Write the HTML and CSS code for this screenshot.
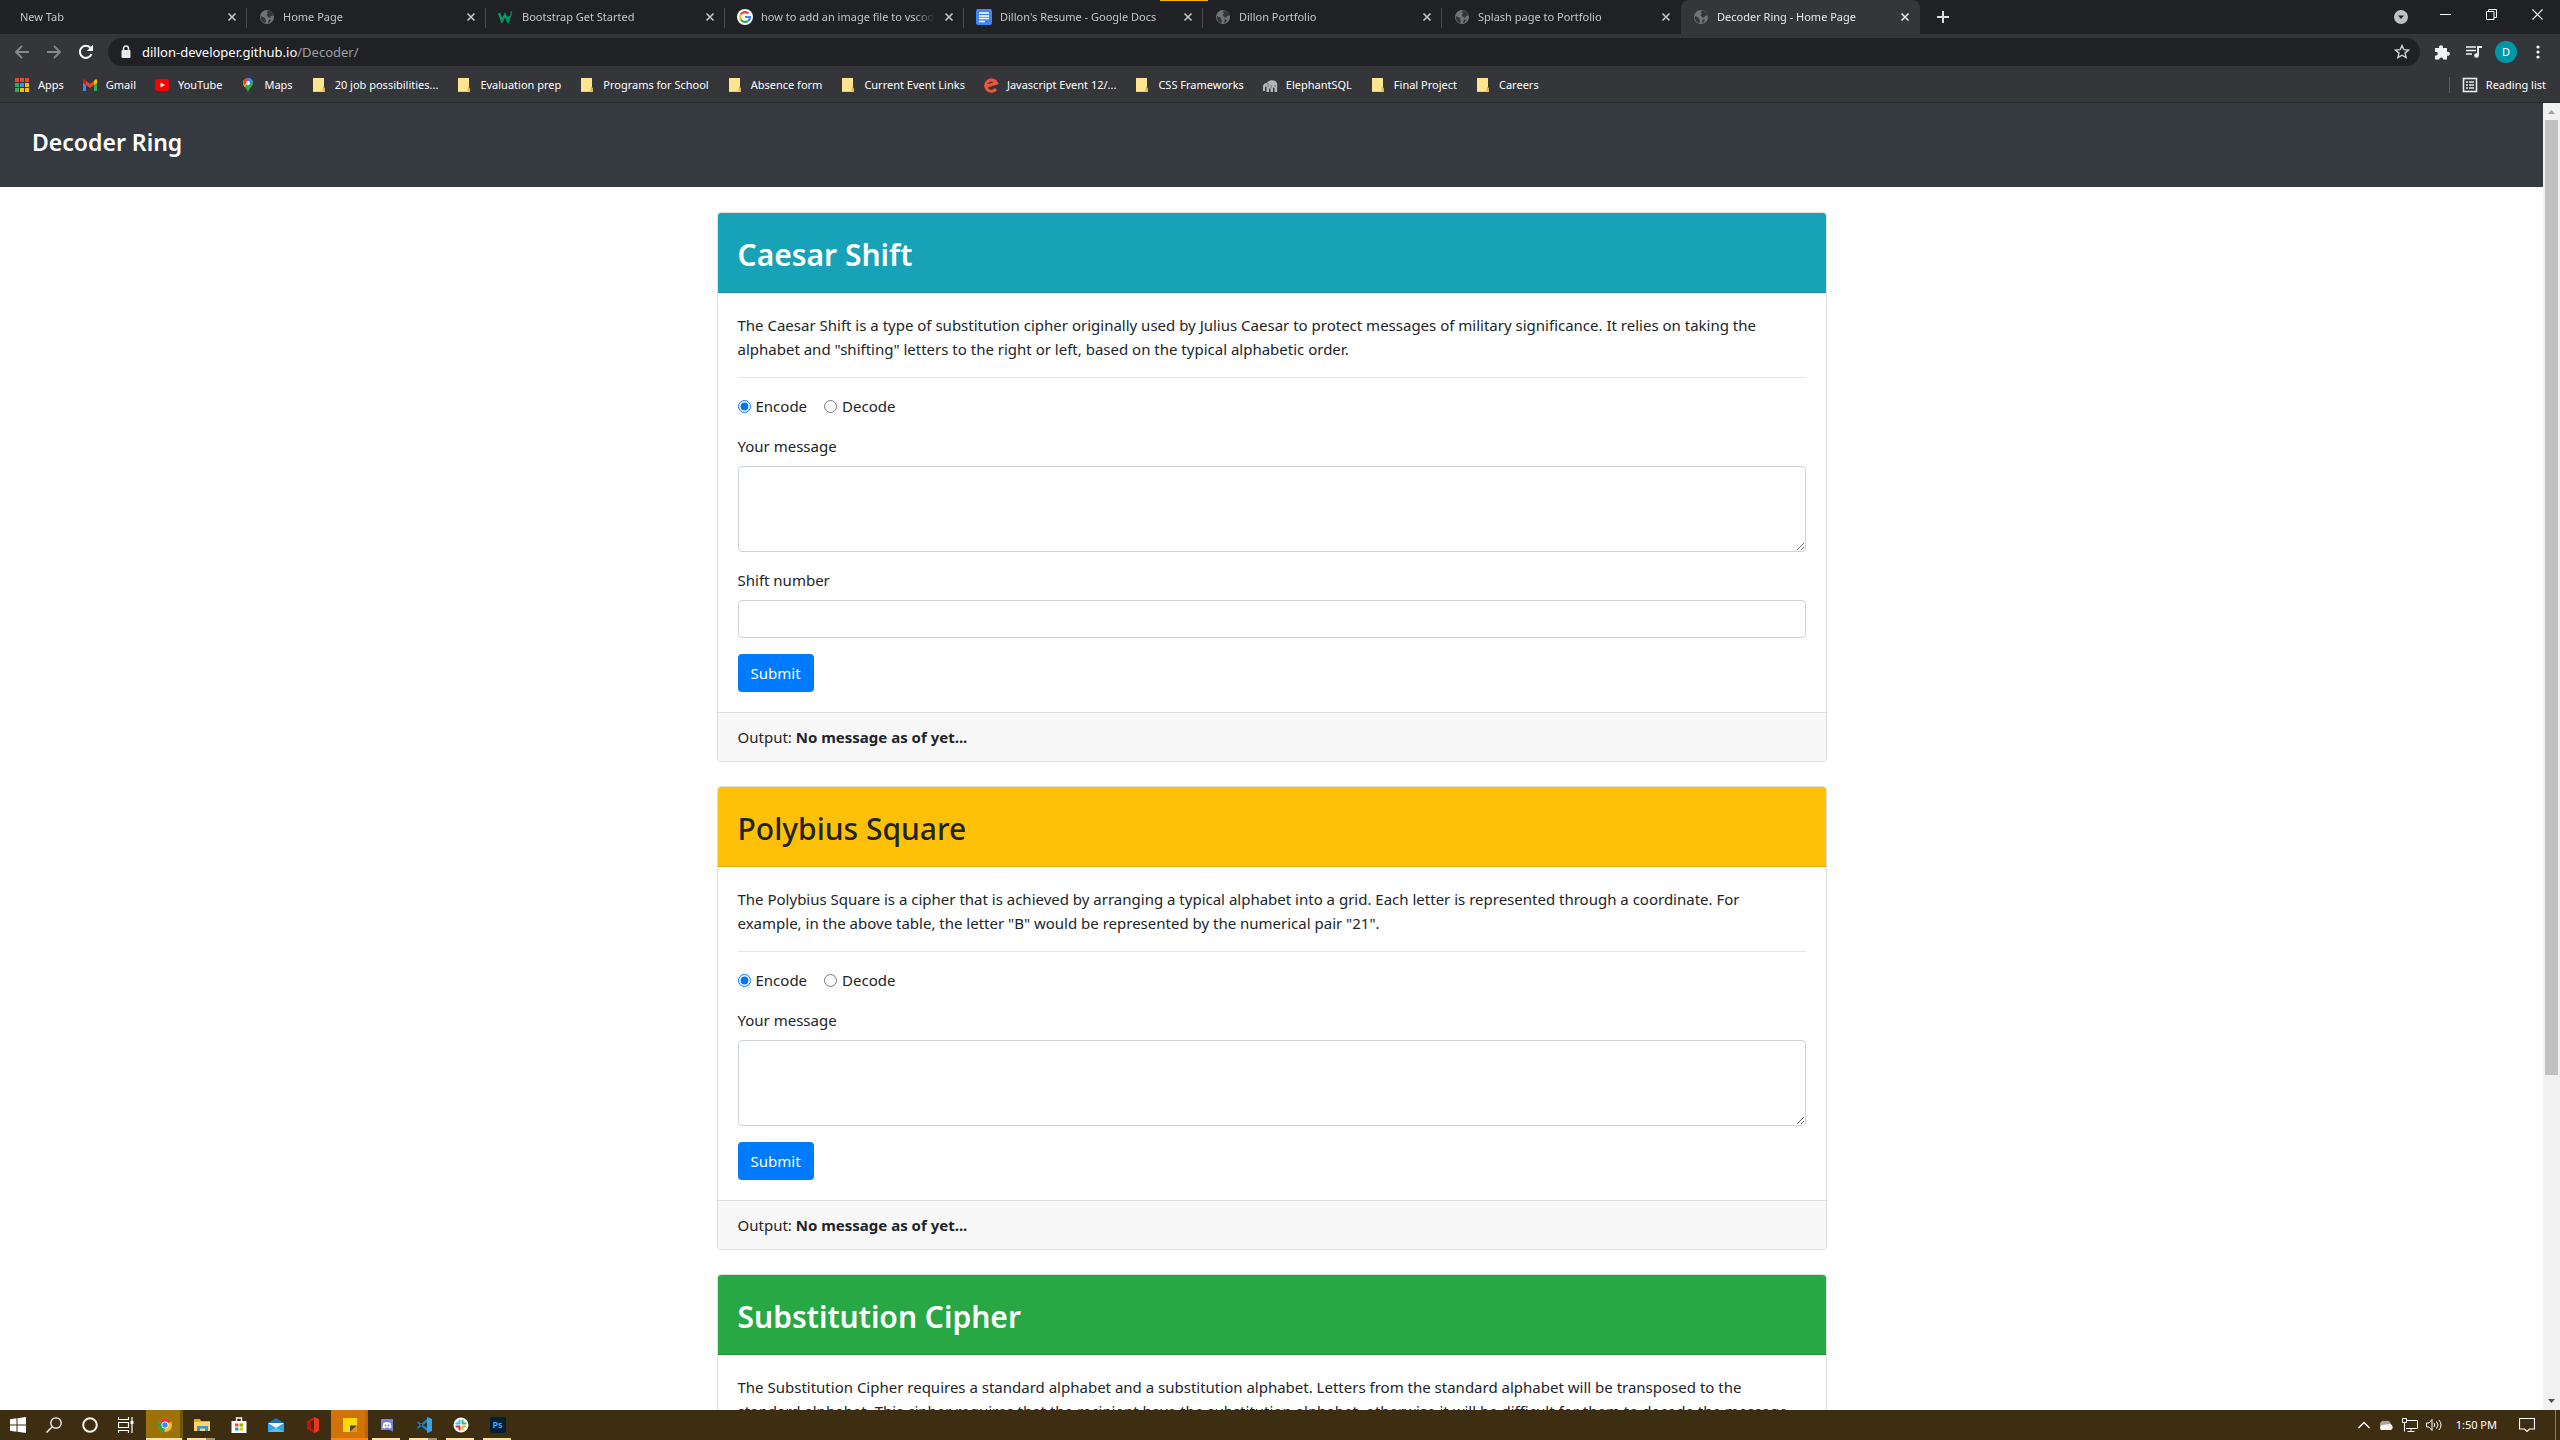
FILE: index.html
```html
<!DOCTYPE html>
<html lang="en">
<head>
<meta charset="utf-8">
<title>Decoder Ring - Home Page</title>
<link rel="stylesheet" href="styles.css">
</head>
<body>
<svg class="defs" aria-hidden="true">
  <symbol id="x" viewBox="0 0 10 10"><path d="M1.5 1.5l7 7M8.500 1.500l-7 7" stroke="currentColor" stroke-width="1.600" fill="none"/></symbol>
  <symbol id="globe" viewBox="0 0 16 16"><circle cx="8" cy="8" r="7" fill="#6f7479"/><path d="M2 7l4 2 1 4-1 1C3 13 1.500 10 2 7zM9 1.500c3 .5 5 2 5.500 5L12 7l-1 2-2-1-1.500-2L9 4 7.500 3zM10 10l2 1-1.500 2.500L9 14z" fill="#35363a"/></symbol>
  <symbol id="folder" viewBox="0 0 16 16"><path d="M2 1h11v10l1 1v3H2z" fill="#ffe591"/><path d="M12 10h1l1 2v3h-3z" fill="#e3b93b"/><path d="M2 14.500h11" stroke="#efce62"/></symbol>
</svg>

<header class="browser">
  <div class="tabstrip">
    <nav class="tabs" aria-label="Tabs">
      <div class="tab first"><span class="tab-title">New Tab</span><button class="close" aria-label="Close"><svg><use href="#x"/></svg></button></div>
      <div class="tab"><svg class="fav"><use href="#globe"/></svg><span class="tab-title">Home Page</span><button class="close" aria-label="Close"><svg><use href="#x"/></svg></button></div>
      <div class="tab"><svg class="fav" viewBox="0 0 16 16"><path d="M1 4l3 8 3-6 3 6 2-5" fill="none" stroke="#059862" stroke-width="2.400"/><path d="M12 3h2l-1 1.500 1 1.500h-2" fill="none" stroke="#059862"/></svg><span class="tab-title">Bootstrap Get Started</span><button class="close" aria-label="Close"><svg><use href="#x"/></svg></button></div>
      <div class="tab"><svg class="fav" viewBox="0 0 16 16"><circle cx="8" cy="8" r="8" fill="#fff"/><g fill="none" stroke-width="2.200"><path d="M11.500 4.500A5 5 0 0 0 3.800 5.500" stroke="#ea4335"/><path d="M3.800 5.500a5 5 0 0 0 0 5" stroke="#fbbc05"/><path d="M3.800 10.500a5 5 0 0 0 7.400 1.300" stroke="#34a853"/><path d="M11.200 11.800A5 5 0 0 0 13 8H8" stroke="#4285f4"/></g></svg><span class="tab-title">how to add an image file to vscode</span><button class="close" aria-label="Close"><svg><use href="#x"/></svg></button></div>
      <div class="tab"><svg class="fav" viewBox="0 0 16 16"><rect width="16" height="16" rx="2" fill="#4285f4"/><path d="M3 4h10M3 7h10M3 9.500h10M3 12.500h6" stroke="#fff" stroke-width="1.600"/></svg><span class="tab-title">Dillon's Resume - Google Docs</span><button class="close" aria-label="Close"><svg><use href="#x"/></svg></button></div>
      <div class="tab"><svg class="fav"><use href="#globe"/></svg><span class="tab-title">Dillon Portfolio</span><button class="close" aria-label="Close"><svg><use href="#x"/></svg></button></div>
      <div class="tab before-active"><svg class="fav"><use href="#globe"/></svg><span class="tab-title">Splash page to Portfolio</span><button class="close" aria-label="Close"><svg><use href="#x"/></svg></button></div>
      <div class="tab active"><svg class="fav"><use href="#globe"/></svg><span class="tab-title">Decoder Ring - Home Page</span><button class="close" aria-label="Close"><svg><use href="#x"/></svg></button></div>
    </nav>
    <button class="new-tab" aria-label="New tab"><svg width="12" height="12"><path d="M6 0v12M0 6h12" stroke="#dadce0" stroke-width="2"/></svg></button>
    <button class="tab-search" aria-label="Search tabs"><svg width="14" height="14"><circle cx="7" cy="7" r="7" fill="#bdc1c6"/><path d="M4 5.500h6L7 9z" fill="#202124"/></svg></button>
    <div class="window-controls">
      <button aria-label="Minimize"><svg width="11" height="11"><path d="M0 5.500h11" stroke="#fff"/></svg></button>
      <button aria-label="Restore"><svg width="11" height="11"><path d="M.5 2.500h7.500v8H.5zM2.500 2.500v-2h8v8H8" fill="none" stroke="#fff"/></svg></button>
      <button aria-label="Close window"><svg width="11" height="11"><path d="M.5.5l10 10M10.500.5l-10 10" stroke="#fff" stroke-width="1.200"/></svg></button>
    </div>
    <i class="tab-alert"></i>
  </div>

  <div class="toolbar">
    <button aria-label="Back"><svg width="16" height="16"><path d="M15 8H2M8 2L2 8l6 6" fill="none" stroke="#86888a" stroke-width="1.800"/></svg></button>
    <button aria-label="Forward"><svg width="16" height="16"><path d="M1 8h13M8 2l6 6-6 6" fill="none" stroke="#86888a" stroke-width="1.800"/></svg></button>
    <button aria-label="Reload"><svg width="16" height="16"><path d="M13.500 10A6 6 0 1 1 12.300 3.800" fill="none" stroke="#fff" stroke-width="2"/><path d="M15 .8V7H8.800z" fill="#fff"/></svg></button>
    <div class="omnibox">
      <svg width="10" height="14"><path d="M2.500 6V3.500a2.500 2.500 0 0 1 5 0V6" fill="none" stroke="#e8eaed" stroke-width="1.500"/><rect x=".5" y="5" width="9" height="8" rx="1" fill="#e8eaed"/></svg>
      <span class="url">dillon-developer.github.io<span>/Decoder/</span></span>
      <svg width="16" height="16"><path d="M8 1.500l1.900 4.200 4.600.4-3.500 3 1.100 4.500L8 11.200l-4.100 2.400L5 9.100l-3.500-3 4.600-.4z" fill="none" stroke="#d0d2d5" stroke-width="1.400"/></svg>
    </div>
    <button aria-label="Extensions"><svg width="16" height="16"><path d="M1 4h4.200a2 2 0 1 1 3.600 0H13v4a2 2 0 1 1 0 3.600V15.500H9.200a2 2 0 1 0-4 0H1v-4a2 2 0 1 0 0-3.700z" fill="#f1f3f4"/></svg></button>
    <button aria-label="Media"><svg width="16" height="16"><path d="M0 3h10M0 6.500h10M0 10h6" stroke="#f1f3f4" stroke-width="1.600"/><path d="M12 11V3h4" fill="none" stroke="#f1f3f4" stroke-width="1.800"/><circle cx="10.500" cy="11.500" r="2.300" fill="#f1f3f4"/></svg></button>
    <button class="avatar" aria-label="Profile">D</button>
    <button class="menu" aria-label="Menu"><svg width="4" height="14"><g fill="#f1f3f4"><circle cx="2" cy="2" r="1.600"/><circle cx="2" cy="7" r="1.600"/><circle cx="2" cy="12" r="1.600"/></g></svg></button>
  </div>

  <nav class="bookmarks" aria-label="Bookmarks">
    <a href="#"><svg viewBox="0 0 16 16"><path d="M1 1h4v4H1zM6 1h4v4H6zM11 1h4v4h-4z" fill="#ea4335"/><path d="M1 6h4v4H1z" fill="#34a853"/><path d="M6 6h4v4H6z" fill="#4285f4"/><path d="M11 6h4v4h-4zM6 11h4v4H6zM11 11h4v4h-4z" fill="#fbbc05"/><path d="M1 11h4v4H1z" fill="#34a853"/></svg>Apps</a>
    <a href="#"><svg viewBox="0 0 16 16"><path d="M1 3v11h3V7z" fill="#4285f4"/><path d="M15 3v11h-3V7z" fill="#34a853"/><path d="M4 4l4 3 4-3v4l-4 3-4-3z" fill="#ea4335"/><path d="M1 3c0-1 1.500-1.500 3 1v4L1 6z" fill="#c5221f"/><path d="M15 3c0-1-1.500-1.500-3 1v4l3-2z" fill="#fbbc04"/></svg>Gmail</a>
    <a href="#"><svg viewBox="0 0 16 16"><rect x="1" y="2" width="14" height="12" rx="3" fill="#f00"/><path d="M6.500 5.500v5L11 8z" fill="#fff"/></svg>YouTube</a>
    <a href="#"><svg viewBox="0 0 16 16"><path d="M3 6a5 5 0 0 1 10 0c0 3.500-4 5-5 9.500-1-4.500-5-6-5-9.500z" fill="#34a853"/><path d="M3 6a5 5 0 0 1 1.200-3.300L8 6l-3.500 4C3.500 8.800 3 7.500 3 6z" fill="#fbbc04"/><path d="M4.200 2.700A5 5 0 0 1 8 1l-1 5-3 2-1-2z" fill="#ea4335"/><path d="M8 1a5 5 0 0 1 4.800 3.700L8 9z" fill="#4285f4"/><circle cx="8" cy="6" r="1.900" fill="#fff"/></svg>Maps</a>
    <a href="#"><svg><use href="#folder"/></svg>20 job possibilities...</a>
    <a href="#"><svg><use href="#folder"/></svg>Evaluation prep</a>
    <a href="#"><svg><use href="#folder"/></svg>Programs for School</a>
    <a href="#"><svg><use href="#folder"/></svg>Absence form</a>
    <a href="#"><svg><use href="#folder"/></svg>Current Event Links</a>
    <a href="#"><svg viewBox="0 0 16 16"><path d="M2.500 9.500L13.500 6A5.700 5.700 0 1 0 13 12" fill="none" stroke="#f05537" stroke-width="3"/></svg>Javascript Event 12/...</a>
    <a href="#"><svg><use href="#folder"/></svg>CSS Frameworks</a>
    <a href="#"><svg viewBox="0 0 16 16"><path d="M1 14c0-3-.5-5 1-7 1-1 2-1 3-1 1-3 8-4 10 0 .6 2 0 5 0 9h-2.500v-4l-1.500-.5V15H8.500v-3.500H7V15H4.500v-5L3 9.500V14z" fill="#b4b6b8"/><path d="M6 6v4M9 8v3M13 8v2" stroke="#6b6d70"/></svg>ElephantSQL</a>
    <a href="#"><svg><use href="#folder"/></svg>Final Project</a>
    <a href="#"><svg><use href="#folder"/></svg>Careers</a>
    <a href="#" class="reading"><svg viewBox="0 0 16 16"><rect x="1.500" y="1.500" width="13" height="13" fill="none" stroke="#e8eaed" stroke-width="1.600"/><path d="M4 5h2M7 5h5M4 8h2M7 8h5M4 11h2M7 11h5" stroke="#e8eaed" stroke-width="1.600"/></svg>Reading list</a>
  </nav>
</header>

<div class="viewport">
  <div class="page">
    <div class="navbar"><h4>Decoder Ring</h4></div>
    <main class="container">
      <section class="card">
        <div class="card-header info"><h2>Caesar Shift</h2></div>
        <form class="card-body">
          <p>The Caesar Shift is a type of substitution cipher originally used by Julius Caesar to protect messages of military significance. It relies on taking the alphabet and "shifting" letters to the right or left, based on the typical alphabetic order.</p>
          <hr>
          <div class="radios">
            <label><input type="radio" name="caesar" checked>Encode</label>
            <label><input type="radio" name="caesar">Decode</label>
          </div>
          <div class="field"><label for="m1">Your message</label><textarea id="m1" rows="3"></textarea></div>
          <div class="field"><label for="s1">Shift number</label><input id="s1" type="text"></div>
          <button class="submit" type="button">Submit</button>
        </form>
        <div class="card-footer">Output: <strong>No message as of yet...</strong></div>
      </section>
      <section class="card">
        <div class="card-header warning"><h2>Polybius Square</h2></div>
        <form class="card-body">
          <p>The Polybius Square is a cipher that is achieved by arranging a typical alphabet into a grid. Each letter is represented through a coordinate. For example, in the above table, the letter "B" would be represented by the numerical pair "21".</p>
          <hr>
          <div class="radios">
            <label><input type="radio" name="polybius" checked>Encode</label>
            <label><input type="radio" name="polybius">Decode</label>
          </div>
          <div class="field"><label for="m2">Your message</label><textarea id="m2" rows="3"></textarea></div>
          <button class="submit" type="button">Submit</button>
        </form>
        <div class="card-footer">Output: <strong>No message as of yet...</strong></div>
      </section>
      <section class="card">
        <div class="card-header success"><h2>Substitution Cipher</h2></div>
        <div class="card-body">
          <p>The Substitution Cipher requires a standard alphabet and a substitution alphabet. Letters from the standard alphabet will be transposed to the standard alphabet. This cipher requires that the recipient have the substitution alphabet, otherwise it will be difficult for them to decode the message.</p>
        </div>
      </section>
    </main>
  </div>
  <div class="scrollbar">
    <svg width="17" height="17"><path d="M5 11h7L8.500 7z" fill="#a3a3a3"/></svg>
    <div class="track"><div class="thumb"></div></div>
    <svg width="17" height="17"><path d="M5 6h7l-3.500 4z" fill="#505050"/></svg>
  </div>
</div>

<footer class="taskbar">
  <button class="sys" aria-label="Start"><svg width="16" height="16"><path d="M0 2.300L6.500 1.300V7.500H0zM7.500 1.200L16 0v7.500H7.500zM0 8.500h6.500v6.200L0 13.700zM7.500 8.500H16V16l-8.500-1.200z" fill="#fff"/></svg></button>
  <button class="sys" aria-label="Search"><svg width="16" height="16"><circle cx="10" cy="6" r="5.200" fill="none" stroke="#fff" stroke-width="1.300"/><path d="M6 10L.5 15.500" stroke="#fff" stroke-width="1.400"/></svg></button>
  <button class="sys" aria-label="Cortana"><svg width="16" height="16"><circle cx="8" cy="8" r="6.800" fill="none" stroke="#f4f2ee" stroke-width="2"/></svg></button>
  <button class="sys" aria-label="Task view"><svg width="16" height="16"><path d="M.5 0v2.500h10V0M.5 16v-2.500h10V16M.5 5.500h10v5H.5zM14 0v16" fill="none" stroke="#fff" stroke-width="1.200"/><path d="M12.500 4h3v3h-3z" fill="#fff"/></svg></button>
  <button class="app chrome open" aria-label="Chrome"><svg width="16" height="16"><circle cx="8" cy="8" r="7" fill="#fbc116"/><path d="M8 8L1.900 4.500A7 7 0 0 1 14.100 4.500z" fill="#e33b2e"/><path d="M8 8L1.900 4.500A7 7 0 0 0 7.500 15z" fill="#2ba24c"/><circle cx="8" cy="8" r="3.500" fill="#fff"/><circle cx="8" cy="8" r="2.700" fill="#4285f4"/></svg></button>
  <button class="app open multi" aria-label="File Explorer"><svg width="16" height="16"><path d="M0 2h6l1 2h9v10H0z" fill="#e9a825"/><path d="M0 5h16v9H0z" fill="#ffd765"/><path d="M3 9h11v5h-3v-2.500H6V14H3z" fill="#3a96dd"/></svg></button>
  <button class="app" aria-label="Store"><svg width="16" height="16"><path d="M5.500 4V1h5v3" fill="none" stroke="#fff" stroke-width="1.400"/><path d="M.5 4h15v12H.5z" fill="#fff"/><path d="M4 6.500h3.500v3H4z" fill="#f25022"/><path d="M8.500 6.500H12v3H8.500z" fill="#7fba00"/><path d="M4 10.500h3.500v3H4z" fill="#00a4ef"/><path d="M8.500 10.500H12v3H8.500z" fill="#ffb900"/></svg></button>
  <button class="app" aria-label="Mail"><svg width="16" height="16"><path d="M0 6l8-5 8 5v9H0z" fill="#1a6fc4"/><path d="M0 6h16v9H0z" fill="#2fa3ee"/><path d="M0 6h16l-8 5z" fill="#eef6fc"/><path d="M0 15l8-4.500L16 15z" fill="#58bdf8"/></svg></button>
  <button class="app" aria-label="Office"><svg width="16" height="16"><path d="M2 4l7-4v3L6 4.500v7L9 13v3l-7-4z" fill="#b51a10"/><path d="M9 0l5 2v12l-5 2z" fill="#e8391d"/></svg></button>
  <button class="app sticky open" aria-label="Sticky Notes"><svg width="16" height="16"><path d="M1 1h14v14H1z" fill="#ffd90d"/><path d="M8 15V8.500h7z" fill="#4a4838"/><path d="M8 15h7V8.500z" fill="#e6930f"/></svg></button>
  <button class="app open" aria-label="Discord"><svg width="16" height="16"><path d="M2 2h12v13l-3-2H2z" fill="#7289da"/><path d="M3.500 10.500l1-4.500 2-.8h3l2 .8 1 4.500-2 1-1-1h-3l-1 1z" fill="#fff"/><circle cx="6.500" cy="8.500" r="1" fill="#7289da"/><circle cx="9.500" cy="8.500" r="1" fill="#7289da"/></svg></button>
  <button class="app open multi" aria-label="VS Code"><svg width="16" height="16"><path d="M12 1L1 10.500l1 1L12 4.500zM12 15L1 5.500l1-1L12 11.500z" fill="#1a86d0"/><path d="M11 0l5 2v12l-5 2z" fill="#34a5ea"/></svg></button>
  <button class="app open" aria-label="Slack"><svg width="16" height="16"><circle cx="8" cy="8" r="7.500" fill="#fff"/><g stroke-width="2" stroke-linecap="round"><path d="M6.500 3.500v3M3.500 6.500h3" stroke="#36c5f0"/><path d="M9.500 3.500v3M9.500 6.500h3" stroke="#2eb67d"/><path d="M9.500 9.500v3M9.500 9.500h3" stroke="#ecb22e"/><path d="M6.500 9.500v3M3.500 9.500h3" stroke="#e01e5a"/></g></svg></button>
  <button class="app open" aria-label="Photoshop"><span class="ps">Ps</span></button>
  <div class="tray">
    <svg width="12" height="8"><path d="M.5 7L6 1.500 11.500 7" fill="none" stroke="#fff" stroke-width="1.300"/></svg>
    <svg width="16" height="12"><path d="M2 7a4 4 0 0 1 5-5 5 5 0 0 1 6 3l-8 5z" fill="#a9a59c"/><path d="M3 11a3 3 0 0 1 1-5l4-.5L12 5a3.200 3.200 0 0 1 1 6z" fill="#f4f3f0"/></svg>
    <svg width="16" height="14"><path d="M4 2.500h11.500v8H4M9 10.500v3M5.500 13.500h7M.5.5h4v4h-4zM2.500 4.500v9" fill="none" stroke="#fff"/></svg>
    <svg width="16" height="14"><path d="M.5 5h2.500l3-3.500v11L3 9H.5z" fill="none" stroke="#fff"/><path d="M8 5q1.500 2 0 4M10.500 3.500q3 3.500 0 7M13 2q4 5 0 10" fill="none" stroke="#fff"/></svg>
    <time>1:50 PM</time>
    <svg width="16" height="16"><path d="M.5 1.500h15v10.500h-5L8 14.500 5.500 12h-5z" fill="none" stroke="#fff" stroke-width="1.200"/></svg>
  </div>
</footer>
</body>
</html>
```
FILE: styles.css
```css
* { box-sizing: border-box; }
body {
  margin: 0;
  height: 100vh;
  display: flex;
  flex-direction: column;
  overflow: hidden;
  font: 15px/24px "Noto Sans", "Open Sans", sans-serif;
  color: #212529;
  background: #fff;
}
button { font: inherit; border: 0; padding: 0; background: none; color: inherit; }
svg { display: block; flex: none; }
h2, h4, p { margin: 0; }
.defs { display: none; }

/* Browser window */
.browser { background: #35363a; color: #fff; font-size: 11px; line-height: 16px; border-bottom: 1px solid #28292c; }
.tabstrip { position: relative; display: flex; align-items: center; height: 34px; padding-left: 8px; background: #202124; }
.tabs { display: flex; align-self: stretch; }
.tab { position: relative; display: flex; align-items: center; gap: 8px; width: 239px; padding: 0 9px 0 12px; color: #c3c6ca; }
.tab::after { content: ""; position: absolute; right: 0; top: 8px; height: 20px; width: 1px; background: #4a4c50; }
.tab.before-active::after, .tab.active::after { display: none; }
.tab.active { background: #35363a; border-radius: 8px 8px 0 0; color: #e8eaed; }
.tab-title { flex: 1; overflow: hidden; white-space: nowrap; -webkit-mask-image: linear-gradient(90deg, #000 88%, transparent); mask-image: linear-gradient(90deg, #000 88%, transparent); }
.fav { width: 16px; height: 16px; }
.close { width: 12px; height: 12px; display: grid; place-items: center; }
.close svg { width: 10px; height: 10px; }
.new-tab { margin-left: 17px; }
.tab-search { margin-left: auto; margin-right: 14px; }
.window-controls { display: flex; align-self: flex-start; height: 28px; }
.window-controls button { width: 46px; display: grid; place-items: center; }
.tab-alert { position: absolute; left: 1160px; top: 0; width: 48px; height: 1px; background: #fbb309; }

.toolbar { display: flex; align-items: center; height: 36px; padding: 0 20px 0 14px; gap: 16px; }
.toolbar button { display: grid; place-items: center; min-width: 16px; }
.omnibox { flex: 1; display: flex; align-items: center; height: 28px; margin: 0 -2px; padding: 0 10px 0 13px; gap: 11px; border-radius: 14px; background: #202124; font-size: 13px; }
.url { flex: 1; }
.url span { color: #9aa0a6; }
.toolbar .avatar { width: 22px; height: 22px; border-radius: 50%; background: #0097a7; font-size: 11px; margin: 0 -3px; }
.toolbar .menu { min-width: 4px; margin-left: 6px; }

.bookmarks { display: flex; align-items: center; height: 32px; padding: 0 14px 3px; gap: 18px; }
.bookmarks a { display: flex; align-items: center; gap: 8px; color: #fff; text-decoration: none; white-space: nowrap; }
.bookmarks svg { width: 16px; height: 16px; }
.bookmarks .reading { margin-left: auto; padding-left: 12px; border-left: 1px solid #5a5c60; }

/* Decoder page */
.viewport { flex: 1; min-height: 0; display: flex; }
.page { flex: 1; overflow: hidden; }
.navbar { padding: 25px 32px 31px; background: #343a40; color: #fff; }
.navbar h4 { font-size: 23px; line-height: 28px; font-weight: 600; }
.container { display: flex; flex-direction: column; gap: 24px; max-width: 1140px; margin: 0 auto; padding: 25px 15px; }
.card { border: 1px solid #dfdfdf; border-radius: 4px; overflow: hidden; }
.card-header { padding: 22px 20px 18px; border-bottom: 1px solid rgba(0, 0, 0, .125); }
.card-header h2 { font-size: 30px; line-height: 39px; font-weight: 600; }
.info { background: #17a2b8; color: #fff; }
.warning { background: #ffc107; }
.warning h2 { font-weight: 500; }
.success { background: #28a745; color: #fff; }
.card-body { padding: 20px; }
hr { border: 0; border-top: 1px solid #e4e4e4; margin: 16px 0; }
.radios { display: flex; gap: 17px; margin-bottom: 16px; }
.radios label { display: flex; align-items: center; gap: 5px; }
.radios input { width: 13px; height: 13px; margin: 0; accent-color: #0075ff; }
.field { margin-bottom: 16px; }
.field label { display: block; margin-bottom: 8px; }
.field textarea, .field input { display: block; width: 100%; padding: 6px 12px; font: inherit; border: 1px solid #ced4da; border-radius: 4px; background: #fff; }
.submit { display: block; padding: 7px 13px; border-radius: 4px; background: #007bff; color: #fff; }
.card-footer { padding: 12px 20px; border-top: 1px solid #dfdfdf; background: #f7f7f7; }

.scrollbar { width: 17px; display: flex; flex-direction: column; background: #f1f1f1; }
.track { flex: 1; padding: 0 2px; }
.thumb { height: 75%; background: #c1c1c1; }

/* Taskbar */
.taskbar { display: flex; height: 30px; background: #3d2e12; color: #fff; font-size: 11px; }
.taskbar button { display: grid; place-items: center; }
.sys { width: 36px; }
.app { position: relative; width: 37px; }
.sys + .app { margin-left: 2px; }
.app.open::after { content: ""; position: absolute; left: 4px; right: 5px; bottom: 0; height: 2px; background: #fde2a4; }
.app.multi::after { background: linear-gradient(90deg, #fde2a4 68%, #a89468 68%); }
.chrome { background: linear-gradient(90deg, #9c7309 91%, #6f520c 91%); }
.app.chrome::after { left: 0; right: 1px; }
.sticky { background: linear-gradient(90deg, #d2730a 91%, #bd640d 91%); }
.app.sticky::after { left: 0; right: 0; background: #ff8413; }
.ps { width: 16px; height: 16px; border-radius: 2px; background: #001e36; color: #31a8ff; font-size: 9px; line-height: 15px; font-weight: 700; }
.tray { margin-left: auto; display: flex; align-items: center; gap: 8px; padding-right: 20px; border-right: 1px solid #8a7f6a; margin-right: 4px; }
.tray time { margin: 0 14px 0 6px; }
```
